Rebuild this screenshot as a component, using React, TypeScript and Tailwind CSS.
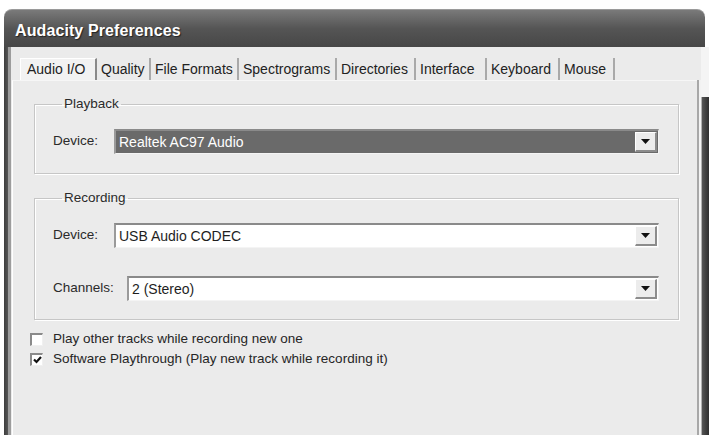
import React from "react";

const tabs = [
  { label: "Audio I/O", w: 77, active: true },
  { label: "Quality", w: 54 },
  { label: "File Formats", w: 88 },
  { label: "Spectrograms", w: 98 },
  { label: "Directories", w: 79 },
  { label: "Interface", w: 71 },
  { label: "Keyboard", w: 73 },
  { label: "Mouse", w: 55 },
];

function Arrow() {
  return (
    <svg width="9" height="5" viewBox="0 0 9 5">
      <path d="M0 0 H9 L4.5 5 Z" fill="#111" />
    </svg>
  );
}

function Combo({ value, selected }: { value: string; selected?: boolean }) {
  return (
    <div
      className={
        "h-[25px] flex items-stretch border-t-[2px] border-l-[2px] border-b border-r border-t-[#8a8a8a] border-l-[#9a9a9a] border-b-[#f4f4f4] border-r-[#f4f4f4] " +
        (selected ? "bg-[#6a6a6a]" : "bg-white")
      }
    >
      <div
        className={
          "flex-1 flex items-center pl-[3px] text-[14px] " +
          (selected ? "text-white" : "text-[#1e1e1e]")
        }
      >
        {value}
      </div>
      <div className="w-[22px] my-[1px] mr-[1px] bg-[#ececec] border-t border-l border-t-white border-l-white border-b-[2px] border-r-[2px] border-b-[#8c8c8c] border-r-[#8c8c8c] flex items-center justify-center">
        <Arrow />
      </div>
    </div>
  );
}

function Row({ label, labelW, value, selected }: { label: string; labelW: number; value: string; selected?: boolean }) {
  return (
    <div className="flex items-center h-[25px]">
      <div className="text-[13.5px] text-[#2a2a2a] shrink-0" style={{ width: labelW }}>
        {label}
      </div>
      <div className="flex-1">
        <Combo value={value} selected={selected} />
      </div>
    </div>
  );
}

function Check({ checked, label }: { checked?: boolean; label: string }) {
  return (
    <div className="flex items-center h-[20px]">
      <div className="w-[13px] h-[13px] bg-white border-t-[2px] border-l-[2px] border-t-[#8a8a8a] border-l-[#8a8a8a] border-b border-r border-b-[#f0f0f0] border-r-[#f0f0f0] flex items-center justify-center">
        {checked && (
          <svg width="9" height="8" viewBox="0 0 9 8">
            <path d="M1 3.5 L3.5 6 L8 1" stroke="#111" strokeWidth="2.2" fill="none" />
          </svg>
        )}
      </div>
      <span className="ml-[10px] text-[13.5px] text-[#262626]">{label}</span>
    </div>
  );
}

export default function App() {
  return (
    <div className="w-[709px] h-[435px] bg-white overflow-hidden pt-[9px] pl-[4px] font-['Liberation_Sans',Arial,sans-serif]">
      <div className="w-[705px] h-[426px] flex flex-col">
        {/* title bar */}
        <div className="w-[701px] h-[38px] shrink-0 rounded-t-[8px] bg-gradient-to-b from-[#7a7a7a] via-[#555555] to-[#474747] border-t border-t-[#9a9a9a] flex items-center pl-[11px] pt-[5px]">
          <span className="text-white font-bold text-[16px] tracking-[0.1px] [text-shadow:1px_1px_1px_#222]">
            Audacity Preferences
          </span>
        </div>
        {/* client */}
        <div className="flex-1 flex">
          <div className="w-[4px] bg-gradient-to-r from-[#3e3e3e] to-[#555555]" />
          <div className="w-[3px] bg-[#9c9c9c]" />
          <div className="flex-1 flex flex-col pt-[11px] pl-[1px] bg-[#ebebeb]">
            {/* tab row */}
            <div className="flex h-[22px] pl-[8px]">
              {tabs.map((t) => (
                <div
                  key={t.label}
                  className={
                    "h-full flex items-center text-[14px] text-[#222] shrink-0 whitespace-nowrap " +
                    (t.active
                      ? "pl-[6px] bg-[#f2f2f2] border-t border-l border-t-white border-l-white border-r-[2px] border-r-[#8a8a8a]"
                      : "pl-[4px] border-r-[2px] border-r-[#a9a9a9]")
                  }
                  style={{ width: t.w }}
                >
                  {t.label}
                </div>
              ))}
            </div>
            {/* tab panel */}
            <div className="flex-1 flex">
              <div className="flex-1 border-l border-t border-l-white border-t-[#f6f6f6] pt-[15px] pl-[21px] pr-[18px]">
                <fieldset className="border border-[#c6c6c6] shadow-[inset_1px_1px_0_#ffffff,1px_1px_0_#ffffff] pl-[18px] pr-[19px] pt-[17px] pb-[19px]">
                  <legend className="ml-[9px] px-[2px] text-[13.5px] leading-[16px] text-[#2a2a2a]">Playback</legend>
                  <Row label="Device:" labelW={61} value="Realtek AC97 Audio" selected />
                </fieldset>
                <fieldset className="mt-[16px] border border-[#c6c6c6] shadow-[inset_1px_1px_0_#ffffff,1px_1px_0_#ffffff] pl-[18px] pr-[19px] pt-[17px] pb-[18px]">
                  <legend className="ml-[9px] px-[2px] text-[13.5px] leading-[16px] text-[#2a2a2a]">Recording</legend>
                  <Row label="Device:" labelW={61} value="USB Audio CODEC" />
                  <div className="h-[28px]" />
                  <Row label="Channels:" labelW={74} value="2 (Stereo)" />
                </fieldset>
                <div className="mt-[9px] -ml-[4px] flex flex-col">
                  <Check label="Play other tracks while recording new one" />
                  <Check checked label="Software Playthrough (Play new track while recording it)" />
                </div>
              </div>
              <div className="w-[2px] bg-[#a8a8a8]" />
              <div className="w-[2px] bg-[#f2f2f2]" />
            </div>
          </div>
          <div className="w-[8px] flex flex-col">
            <div className="h-[50px] bg-[#f4f4f4]" />
            <div className="flex-1 flex">
              <div className="w-[1px] bg-[#b0b0b0]" />
              <div className="flex-1 bg-gradient-to-r from-[#555555] to-[#2e2e2e]" />
            </div>
          </div>
        </div>
      </div>
    </div>
  );
}
